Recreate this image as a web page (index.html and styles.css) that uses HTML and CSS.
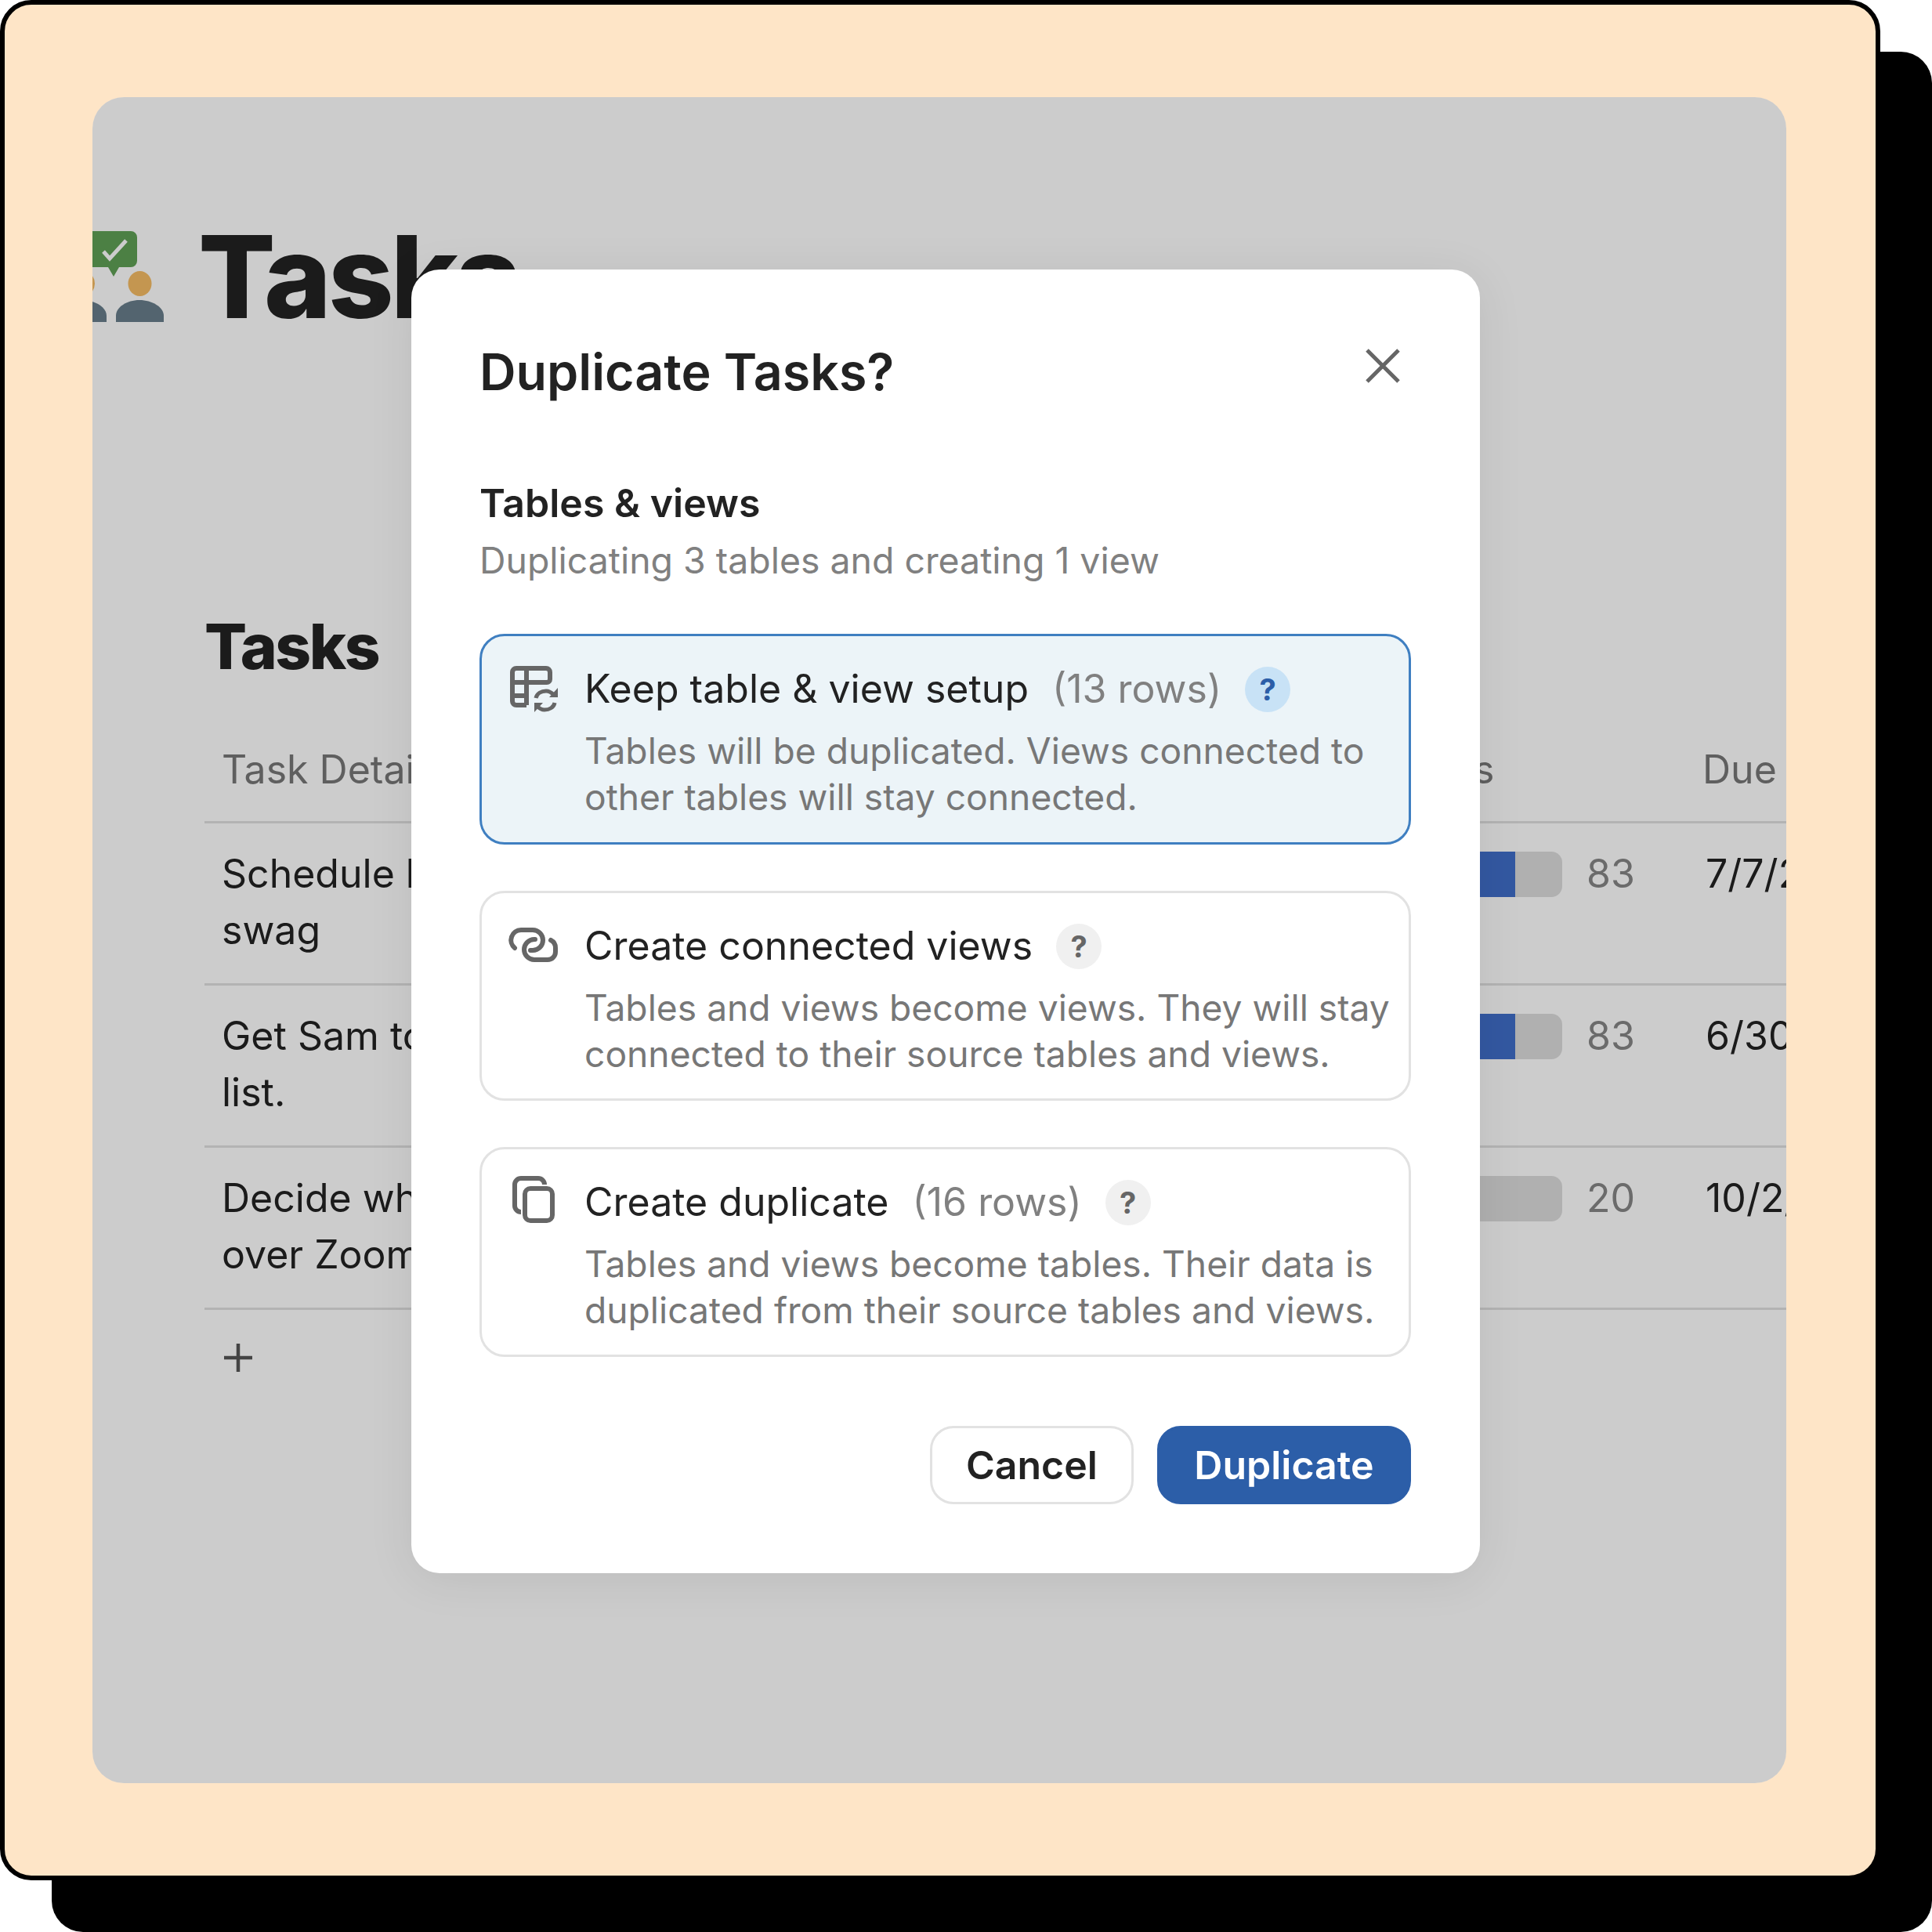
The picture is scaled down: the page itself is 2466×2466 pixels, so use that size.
FILE: index.html
```html
<!DOCTYPE html>
<html lang="en">

<head>
    <meta charset="utf-8">
    <title>Duplicate Tasks</title>
    <link rel="stylesheet" href="styles.css">
</head>

<body>
    <div class="frame">
        <div class="app">
            <div class="page_head">
                <svg class="page_logo" viewBox="0 0 134 116" width="134" height="116">
                    <path fill="#60a055" d="M43 0h49a8 8 0 0 1 8 8v30a8 8 0 0 1-8 8H77l-7 12-7-12H43a8 8 0 0 1-8-8V8a8 8 0 0 1 8-8z" />
                    <path fill="none" stroke="#fff" stroke-width="5" d="M57 26l8 9 21-23" />
                    <ellipse fill="#f5bc64" cx="31" cy="67" rx="15" ry="16" />
                    <ellipse fill="#f5bc64" cx="103.500" cy="67" rx="15" ry="16" />
                    <path fill="#687e8b" d="M0 116v-8c0-11 14-20 30-20s31 9 31 20v8z" />
                    <path fill="#687e8b" d="M73 116v-8c0-11 14-20 30-20s31 9 31 20v8z" />
                </svg>
                <h1 class="page_title">Tasks</h1>
            </div>

            <h2 class="table_title">Tasks</h2>

            <div class="table">
                <div class="row head">
                    <div class="cell">Task Details</div>
                    <div class="cell progress_head">Progress</div>
                    <div class="cell">Due</div>
                </div>
                <div class="row">
                    <div class="cell">Schedule kickoff and order<br>swag</div>
                    <div class="cell progress">
                        <div class="bar"><div class="fill" style="width: 83%"></div></div>
                        <span class="num">83</span>
                    </div>
                    <div class="cell date">7/7/2023</div>
                </div>
                <div class="row">
                    <div class="cell">Get Sam to add us to the mailing<br>list.</div>
                    <div class="cell progress">
                        <div class="bar"><div class="fill" style="width: 83%"></div></div>
                        <span class="num">83</span>
                    </div>
                    <div class="cell date">6/30/2023</div>
                </div>
                <div class="row">
                    <div class="cell">Decide whether to meet in person<br>over Zoom</div>
                    <div class="cell progress">
                        <div class="bar"><div class="fill" style="width: 20%"></div></div>
                        <span class="num">20</span>
                    </div>
                    <div class="cell date">10/2/2023</div>
                </div>
            </div>

            <svg class="add_row" viewBox="0 0 36 36" width="36" height="36">
                <path fill="none" stroke="#555" stroke-width="4.500" d="M0 18h36M18 0v36" />
            </svg>

            <div class="overlay">
                <div class="modal">
                    <div class="modal_head">
                        <h3 class="modal_title">Duplicate Tasks?</h3>
                        <svg class="close" viewBox="0 0 44 44" width="44" height="44">
                            <path fill="none" stroke="#666" stroke-width="5" d="M2 2l40 40M42 2L2 42" />
                        </svg>
                    </div>

                    <div class="section_title">Tables &amp; views</div>
                    <div class="section_sub">Duplicating 3 tables and creating 1 view</div>

                    <div class="option selected">
                        <svg class="option_icon" viewBox="0 0 62 62" width="62" height="62">
                            <path fill="none" stroke="#666" stroke-width="6" stroke-linejoin="round" d="M22 52H9a5 5 0 0 1-5-5V10a5 5 0 0 1 5-5h38a5 5 0 0 1 5 5v9a4 4 0 0 1-4 4H4M4 40h18M22 5v47" />
                            <path fill="none" stroke="#666" stroke-width="5" d="M34 43c1-6 7-9 13-9 4 0 7 2 10 5M58 49c-1 6-7 9-13 9-4 0-7-2-10-5" />
                            <path fill="#666" d="M62 30v12H51zM32 61V49h11z" />
                        </svg>
                        <div class="option_body">
                            <div class="option_title">
                                <span>Keep table &amp; view setup</span>
                                <span class="rows">(13 rows)</span>
                                <span class="help">?</span>
                            </div>
                            <div class="option_desc">Tables will be duplicated. Views connected to<br>other tables will stay connected.</div>
                        </div>
                    </div>

                    <div class="option">
                        <svg class="option_icon" viewBox="0 0 62 62" width="62" height="62">
                            <path fill="none" stroke="#666" stroke-width="6" stroke-linecap="round" d="M7 34A13 13 0 0 1 15 11h15a13 13 0 0 1 0 26h-3" />
                            <path fill="none" stroke="#666" stroke-width="6" stroke-linecap="round" d="M33 23h-1a13 13 0 0 0 0 26h17a10 10 0 0 0 10-10v-5a11 11 0 0 0-6-10" />
                        </svg>
                        <div class="option_body">
                            <div class="option_title">
                                <span>Create connected views</span>
                                <span class="help">?</span>
                            </div>
                            <div class="option_desc">Tables and views become views. They will stay<br>connected to their source tables and views.</div>
                        </div>
                    </div>

                    <div class="option">
                        <svg class="option_icon" viewBox="0 0 62 62" width="62" height="62">
                            <path fill="none" stroke="#666" stroke-width="6" d="M15 44a8 8 0 0 1-8-8V9a8 8 0 0 1 8-8h22a8 8 0 0 1 8 8" />
                            <rect fill="none" stroke="#666" stroke-width="6" x="20" y="14" width="35" height="41" rx="7" />
                        </svg>
                        <div class="option_body">
                            <div class="option_title">
                                <span>Create duplicate</span>
                                <span class="rows">(16 rows)</span>
                                <span class="help">?</span>
                            </div>
                            <div class="option_desc">Tables and views become tables. Their data is<br>duplicated from their source tables and views.</div>
                        </div>
                    </div>

                    <div class="modal_foot">
                        <button class="btn">Cancel</button>
                        <button class="btn primary">Duplicate</button>
                    </div>
                </div>
            </div>
        </div>
    </div>
</body>

</html>
```

FILE: styles.css
```css
* {
    box-sizing: border-box;
}

body {
    margin: 0;
    min-height: 2466px;
    background: #fff;
    font-family: Inter, "Liberation Sans", sans-serif;
    color: #222;
    overflow: hidden;
}

.frame {
    width: 2400px;
    height: 2400px;
    padding: 118px 0 0 112px;
    background: #fee5c7;
    border: 6px solid #000;
    border-radius: 40px;
    box-shadow: 66px 66px 0 #000;
}

.app {
    position: relative;
    width: 2162px;
    height: 2152px;
    padding-top: 171px;
    background: #fff;
    border-radius: 40px;
    overflow: hidden;
}

.page_head {
    display: flex;
    align-items: center;
    gap: 44px;
    height: 116px;
    margin-left: -43px;
}

.page_logo {
    flex: none;
}

.page_title {
    margin: 0;
    font-size: 146px;
    font-weight: 800;
    letter-spacing: -4px;
    line-height: 116px;
}

.table_title {
    margin: 0 0 0 143px;
    padding-top: 365px;
    font-size: 80px;
    font-weight: 800;
    letter-spacing: -2.500px;
    line-height: 97px;
}

.table {
    margin-left: 143px;
    font-size: 50px;
    line-height: 72px;
}

.row {
    display: grid;
    grid-template-columns: 1356px 534px 300px;
    height: 207px;
    padding-top: 28px;
    border-bottom: 3px solid #e0e0e0;
    white-space: nowrap;
}

.row.head {
    height: 178px;
    padding-top: 73px;
    color: #777;
}

.cell {
    padding-left: 22px;
}

.progress_head {
    padding-left: 80px;
}

.date {
    padding-left: 26px;
}

.progress {
    display: flex;
    align-items: flex-start;
    gap: 31px;
    padding-left: 23px;
}

.bar {
    width: 354px;
    height: 58px;
    margin-top: 8px;
    background: #dcdcdc;
    border-radius: 14px;
    overflow: hidden;
}

.fill {
    height: 100%;
    background: #406fca;
}

.num {
    color: #868686;
}

.add_row {
    display: block;
    margin: 43px 0 0 168px;
}

.overlay {
    position: absolute;
    inset: 0;
    background: rgba(0, 0, 0, .2);
}

.modal {
    position: absolute;
    left: 407px;
    top: 220px;
    width: 1364px;
    height: 1664px;
    padding: 0 88px 0 87px;
    background: #fff;
    border-radius: 36px;
    box-shadow: 0 8px 60px rgba(0, 0, 0, .08);
}

.modal_head {
    display: flex;
    justify-content: space-between;
    padding-top: 90px;
}

.modal_title {
    margin: 0;
    font-size: 64.500px;
    font-weight: 600;
    line-height: 82px;
}

.close {
    margin: 11px 14px 0 0;
}

.section_title {
    margin-top: 90px;
    font-size: 50px;
    font-weight: 600;
    line-height: 73px;
}

.section_sub {
    font-size: 46.400px;
    line-height: 72px;
    color: #808080;
}

.option {
    display: flex;
    gap: 34px;
    height: 268px;
    margin-top: 59px;
    padding: 36px 0 0 35px;
    border: 3px solid #e2e2e2;
    border-radius: 32px;
}

.section_sub + .option {
    height: 269px;
    margin-top: 58px;
}

.option.selected {
    background: #ecf4f8;
    border-color: #3f7fc1;
}

.option_icon {
    flex: none;
    overflow: visible;
}

.option_title {
    display: flex;
    align-items: center;
    gap: 30px;
    font-size: 50px;
    line-height: 60px;
    white-space: nowrap;
}

.rows {
    color: #808080;
}

.help {
    width: 58px;
    height: 58px;
    margin-top: 3px;
    background: #f0f0f0;
    border-radius: 50%;
    font-size: 38px;
    font-weight: 700;
    line-height: 58px;
    text-align: center;
    color: #666;
}

.selected .help {
    background: #c8e2f6;
    color: #2c5ea8;
}

.option_desc {
    margin-top: 20px;
    font-size: 46.200px;
    line-height: 59px;
    color: #777;
    white-space: nowrap;
}

.modal_foot {
    display: flex;
    justify-content: flex-end;
    gap: 30px;
    margin-top: 88px;
}

.btn {
    height: 100px;
    padding: 0 43px;
    background: #fff;
    border: 3px solid #e2e2e2;
    border-radius: 30px;
    font-family: inherit;
    font-size: 50px;
    font-weight: 600;
    color: #222;
}

.btn.primary {
    padding: 0 44.500px;
    background: #2c5ea8;
    border-color: #2c5ea8;
    color: #fff;
}
```
